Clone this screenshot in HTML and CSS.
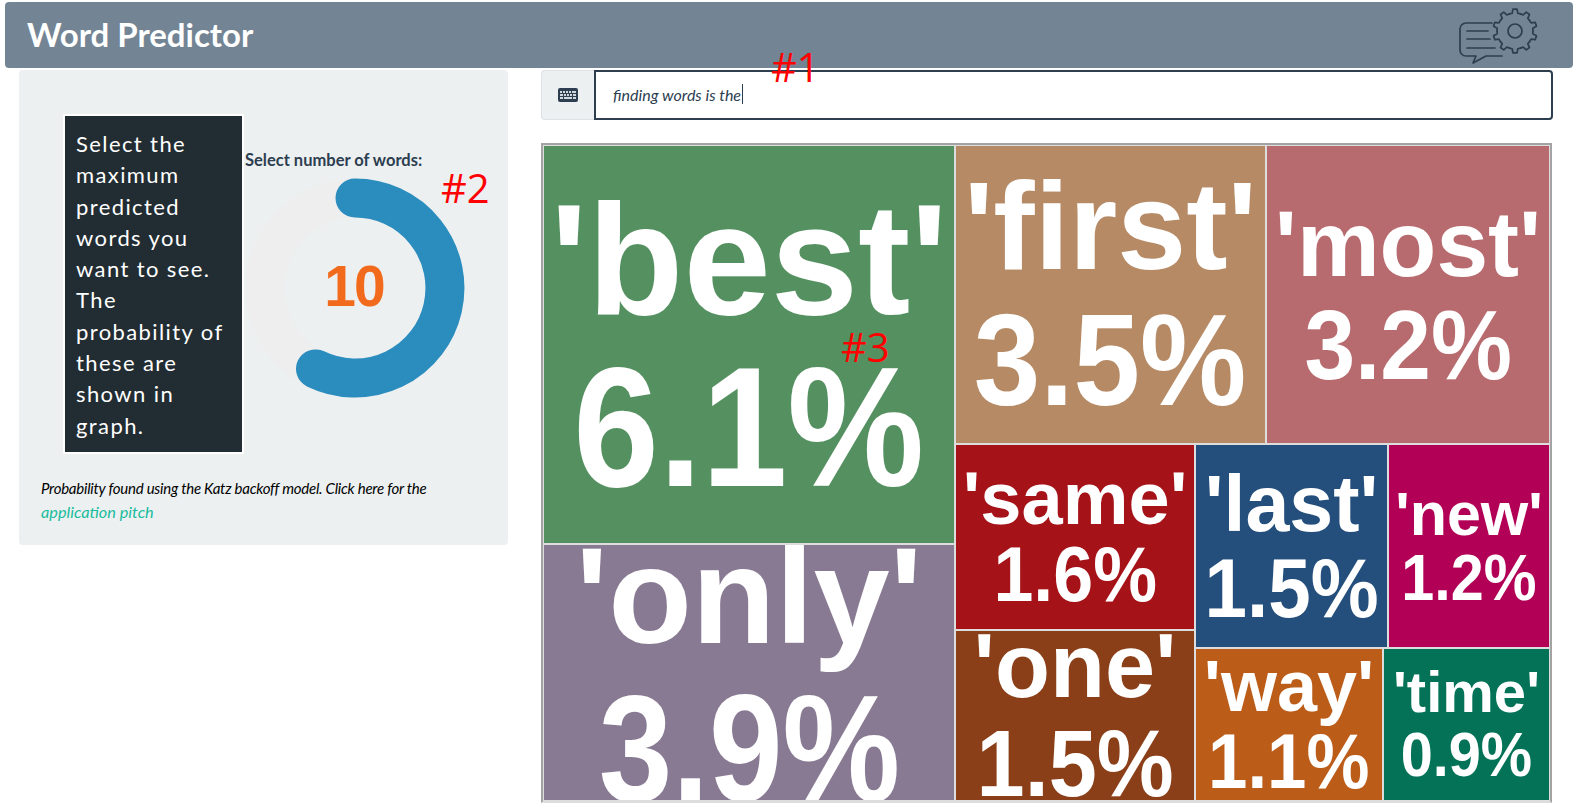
FILE: index.html
```html
<!DOCTYPE html>
<html lang="en">
<head>
<meta charset="utf-8">
<title>Word Predictor</title>
<link rel="stylesheet" href="styles.css">
</head>
<body>
<header class="topbar">
  <h1 class="brand">Word Predictor</h1>
  <svg class="logo" width="110" height="66" viewBox="0 0 110 66" aria-hidden="true">
    <g fill="none" stroke="#2c3e50" stroke-width="1.7" stroke-linejoin="round" stroke-linecap="round">
      <path d="M46 21H20a6 6 0 0 0-6 6v21a6 6 0 0 0 6 6h10l-3 7 13-7h16"/>
      <path d="M21 29h21M21 37h23M21 46h28"/>
      <g transform="translate(69 29)">
        <circle r="7"/>
        <g id="tooth"><path d="M-5.56-17.12-2.82-17.78-2-21.9H2L2.82-17.78 5.56-17.12"/></g>
        <use href="#tooth" transform="rotate(36)"/>
        <use href="#tooth" transform="rotate(72)"/>
        <use href="#tooth" transform="rotate(108)"/>
        <use href="#tooth" transform="rotate(144)"/>
        <use href="#tooth" transform="rotate(180)"/>
        <use href="#tooth" transform="rotate(216)"/>
        <use href="#tooth" transform="rotate(252)"/>
        <use href="#tooth" transform="rotate(288)"/>
        <use href="#tooth" transform="rotate(324)"/>
      </g>
    </g>
  </svg>
</header>
<main class="layout">
  <aside class="sidebar">
    <div class="controls">
      <div class="hint">Select the maximum predicted words you want to see. The probability of these are shown in graph.</div>
      <div class="knob-field">
        <label class="knob-label">Select number of words:</label>
        <svg class="knob" width="220" height="220" viewBox="0 0 220 220">
          <path class="knob-trail" d="M70.5 190.9A90 90 0 0 1 110 20"/>
          <path class="knob-value" d="M110 20A90 90 0 1 1 70.5 190.9"/>
          <text class="knob-number" x="109" y="128" text-anchor="middle">10</text>
        </svg>
      </div>
    </div>
    <p class="note">Probability found using the Katz backoff model. Click here for the <a class="note-link" href="#">application pitch</a></p>
  </aside>
  <section class="content">
    <div class="input-group">
      <span class="addon">
        <svg width="20" height="14" viewBox="0 0 20 14" aria-hidden="true">
          <rect width="20" height="14" rx="2" fill="#2c3e50"/>
          <path d="M2 3h2v2H2zM5 3h2v2H5zM8 3h2v2H8zM11 3h2v2h-2zM14 3h4v2h-4zM2 6h3v2H2zM6 6h2v2H6zM9 6h2v2H9zM12 6h2v2h-2zM15 6h3v2h-3zM2 9h3v2H2zM6 9h8v2H6zM15 9h3v2h-3z" fill="#cfd6dc"/>
        </svg>
      </span>
      <div class="text-input"><span class="typed">finding words is the</span><span class="caret"></span></div>
    </div>
    <div class="treemap">
      <div class="col col-a">
        <div class="tile t-best"><div class="lines"><div class="word">'best'</div><div class="pct">6.1%</div></div></div>
        <div class="tile t-only"><div class="lines"><div class="word">'only'</div><div class="pct">3.9%</div></div></div>
      </div>
      <div class="col col-b">
        <div class="row row-top">
          <div class="tile t-first"><div class="lines"><div class="word">'first'</div><div class="pct">3.5%</div></div></div>
          <div class="tile t-most"><div class="lines"><div class="word">'most'</div><div class="pct">3.2%</div></div></div>
        </div>
        <div class="row row-bottom">
          <div class="col col-c">
            <div class="tile t-same"><div class="lines"><div class="word">'same'</div><div class="pct">1.6%</div></div></div>
            <div class="tile t-one"><div class="lines"><div class="word">'one'</div><div class="pct">1.5%</div></div></div>
          </div>
          <div class="col col-d">
            <div class="row row-d1">
              <div class="tile t-last"><div class="lines"><div class="word">'last'</div><div class="pct">1.5%</div></div></div>
              <div class="tile t-new"><div class="lines"><div class="word">'new'</div><div class="pct">1.2%</div></div></div>
            </div>
            <div class="row row-d2">
              <div class="tile t-way"><div class="lines"><div class="word">'way'</div><div class="pct">1.1%</div></div></div>
              <div class="tile t-time"><div class="lines"><div class="word">'time'</div><div class="pct">0.9%</div></div></div>
            </div>
          </div>
        </div>
      </div>
    </div>
  </section>
</main>
<span class="mark mark-1">#1</span>
<span class="mark mark-2">#2</span>
<span class="mark mark-3">#3</span>
</body>
</html>
```

FILE: styles.css
```css
* { box-sizing: border-box; }
html, body { margin: 0; height: 100%; }
body {
  position: relative;
  width: 1575px;
  height: 810px;
  overflow: hidden;
  background: #fff;
  font-family: Lato, "Liberation Sans", sans-serif;
  color: #2c3e50;
}

.topbar {
  display: flex;
  align-items: center;
  justify-content: space-between;
  height: 66px;
  margin: 2px 2px 0 5px;
  padding: 0 32px 0 22px;
  background: #738595;
  border-radius: 4px;
}
.brand { margin: 0 0 2px; font-size: 33px; font-weight: 700; color: #fff; }
.logo { margin-right: -15px; }

.layout { display: flex; align-items: flex-start; padding: 2px 22px 0 19px; }

.sidebar {
  width: 489px;
  height: 475px;
  padding: 44px 22px 0;
  background: #ecf0f1;
  border-radius: 4px;
}
.controls { display: flex; align-items: flex-start; }
.hint {
  width: 181px;
  height: 340px;
  margin-left: 22px;
  padding: 12px 8px 0 11px;
  border: 2px solid #fff;
  background: #222d33;
  color: #fff;
  font-size: 22px;
  line-height: 31.3px;
  letter-spacing: 1.4px;
}
.knob-field { display: flex; flex-direction: column; margin-left: 1px; padding-top: 36px; }
.knob-label { height: 28px; font-size: 16.5px; font-weight: 700; line-height: 20px; white-space: nowrap; }
.knob { display: block; }
.knob-trail, .knob-value { fill: none; stroke-width: 39; stroke-linecap: round; }
.knob-trail { stroke: #eeeeee; stroke-linecap: butt; }
.knob-value { stroke: #2b8cbe; }
.knob-number { fill: #f26a1b; font-family: "Liberation Sans", sans-serif; font-size: 57px; font-weight: 700; letter-spacing: -2px; }

.note {
  margin: 23px 0 0;
  color: #000;
  font-size: 15px;
  font-style: italic;
  line-height: 23px;
  letter-spacing: -0.25px;
}
.note-link { color: #18bc9c; font-size: 16.3px; letter-spacing: 0; text-decoration: none; }

.content { width: 1012px; margin-left: 33px; }
.input-group { display: flex; height: 50px; }
.addon {
  display: flex;
  align-items: center;
  justify-content: center;
  width: 53px;
  background: #ecf0f1;
  border: 1px solid #dee2e6;
  border-right: 0;
  border-radius: 4px 0 0 4px;
}
.text-input {
  flex: 1;
  display: flex;
  align-items: center;
  padding: 0 0 2px 17px;
  border: 2px solid #2c3e50;
  border-radius: 0 4px 4px 0;
  font-size: 16px;
  font-style: italic;
}
.caret { width: 1px; height: 20px; margin-left: 1px; background: #2c3e50; }

.treemap {
  display: flex;
  gap: 2px;
  width: 1011px;
  height: 660px;
  margin-top: 23px;
  padding: 1px;
  border: 2px solid #a3a3a3;
  border-bottom-color: #ddd;
  background: #ddd;
}
.col { display: flex; flex: none; flex-direction: column; gap: 2px; min-height: 0; }
.row { display: flex; flex: none; gap: 2px; min-height: 0; }
.col-a { width: 410px; }
.col-b { width: 593px; }
.row-top { height: 297px; }
.row-bottom { height: 355px; }
.col-c { width: 238px; }
.col-d { width: 353px; }
.row-d1 { height: 202px; }
.row-d2 { height: 151px; }

.tile {
  display: flex;
  flex: none;
  justify-content: center;
  min-height: 0;
  overflow: hidden;
  color: #fff;
  font-family: "Liberation Sans", Arial, sans-serif;
  font-weight: 700;
  text-align: center;
  white-space: nowrap;
}
.word { line-height: 1.15; }
.pct { line-height: 1.15; transform: scaleX(0.92); }

.t-best { height: 397px; background: #559160; }
.t-best .word { margin-top: 24px; font-size: 157px; }
.t-best .pct { margin-top: -22px; font-size: 171px; transform: scaleX(0.9); }
.t-only { height: 255px; background: #887a92; }
.t-only .word { margin-top: -28px; font-size: 137px; }
.t-only .pct { margin-top: -14px; font-size: 152px; transform: scaleX(0.87); }
.t-first { width: 309px; background: #b68a65; }
.t-first .word { margin-top: 9px; font-size: 124px; }
.t-first .pct { margin-top: -12px; font-size: 130px; }
.t-most { width: 282px; background: #b86b6f; }
.t-most .word { margin-top: 45px; font-size: 93px; }
.t-most .pct { margin-top: -10px; font-size: 99px; }
.t-same { height: 184px; background: #a51218; }
.t-same .word { margin-top: 11px; font-size: 74px; }
.t-same .pct { margin-top: -11px; font-size: 78px; }
.t-one { height: 169px; background: #8a3f18; }
.t-one .word { margin-top: -16px; font-size: 90px; }
.t-one .pct { margin-top: -9px; font-size: 94px; }
.t-last { width: 191px; background: #244f7c; }
.t-last .word { margin-top: 14px; font-size: 79px; }
.t-last .pct { margin-top: -9px; font-size: 83px; }
.t-new { width: 160px; background: #b10056; }
.t-new .word { margin-top: 34px; font-size: 61px; }
.t-new .pct { margin-top: -8px; font-size: 64.5px; }
.t-way { width: 186px; background: #bb5c19; }
.t-way .word { margin-top: -4px; font-size: 72px; }
.t-way .pct { margin-top: -11px; font-size: 77px; }
.t-time { width: 165px; background: #037257; }
.t-time .word { margin-top: 10px; font-size: 58px; }
.t-time .pct { margin-top: -8px; font-size: 62.7px; }

.mark { position: absolute; color: #f00; font-family: "Open Sans", sans-serif; font-size: 40px; line-height: 1; }
.mark-1 { left: 771px; top: 47px; }
.mark-2 { left: 441px; top: 168px; }
.mark-3 { left: 841px; top: 327px; }
```
